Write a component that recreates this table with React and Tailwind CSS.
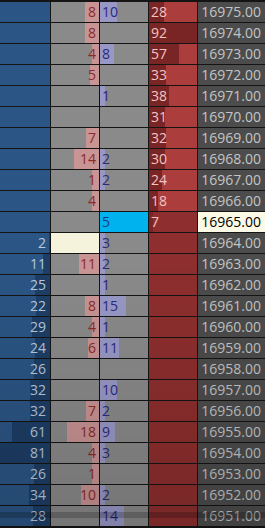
import React from "react";

const rows = [
  { p: 16975, ask: 28, s: 8, b: 10 },
  { p: 16974, ask: 92, s: 8 },
  { p: 16973, ask: 57, s: 4, b: 8 },
  { p: 16972, ask: 33, s: 5 },
  { p: 16971, ask: 38, b: 1 },
  { p: 16970, ask: 31 },
  { p: 16969, ask: 32, s: 7 },
  { p: 16968, ask: 30, s: 14, b: 2 },
  { p: 16967, ask: 24, s: 1, b: 2 },
  { p: 16966, ask: 18, s: 4 },
  { p: 16965, ask: 7, b: 5, cur: true },
  { p: 16964, bid: 2, b: 3, last: true },
  { p: 16963, bid: 11, s: 11, b: 2 },
  { p: 16962, bid: 25, b: 1 },
  { p: 16961, bid: 22, s: 8, b: 15 },
  { p: 16960, bid: 29, s: 4, b: 1 },
  { p: 16959, bid: 24, s: 6, b: 11 },
  { p: 16958, bid: 26 },
  { p: 16957, bid: 32, b: 10 },
  { p: 16956, bid: 32, s: 7, b: 2 },
  { p: 16955, bid: 61, s: 18, b: 9 },
  { p: 16954, bid: 81, s: 4, b: 3 },
  { p: 16953, bid: 26, s: 1 },
  { p: 16952, bid: 34, s: 10, b: 2 },
  { p: 16951, bid: 28, b: 14 },
];

function Row({ r }) {
  const askBase = r.ask && !r.cur ? "bg-[#ab3d3d]" : "bg-[#8e2e2e]";
  return (
    <div className="grid grid-cols-[50px_48px_48px_48px_67px] gap-x-px h-5">
      {/* bid */}
      <div className="relative bg-[#2b5584] flex items-center justify-end pr-1 overflow-hidden">
        {r.bid ? (
          <div
            className="absolute right-0 top-0 bottom-0 bg-[#1d3e66]"
            style={{ width: `${(r.bid / 81) * 50}px` }}
          />
        ) : null}
        {r.bid ? <span className="relative text-[#b9c9de]">{r.bid}</span> : null}
      </div>
      {/* sells at bid */}
      <div
        className={`relative flex items-center justify-end pr-[3px] overflow-hidden ${
          r.last ? "bg-[#f6f3dd]" : "bg-[#8a8a8a]"
        }`}
      >
        {r.s ? (
          <div
            className="absolute right-0 top-0 bottom-0 bg-[#c99494]"
            style={{ width: `${Math.max(r.s * 1.8, 7)}px` }}
          />
        ) : null}
        {r.s ? <span className="relative text-[#8c2b2b]">{r.s}</span> : null}
      </div>
      {/* buys at ask */}
      <div
        className={`relative flex items-center pl-[2px] overflow-hidden ${
          r.cur ? "bg-[#00b3ef]" : "bg-[#8a8a8a]"
        }`}
      >
        {r.b && !r.cur ? (
          <div
            className="absolute left-0 top-0 bottom-0 bg-[#9898c6]"
            style={{ width: `${Math.max(r.b * 1.7, 5)}px` }}
          />
        ) : null}
        {r.b ? (
          <span className={`relative ${r.cur ? "text-[#1e3a78]" : "text-[#2b2b7e]"}`}>{r.b}</span>
        ) : null}
      </div>
      {/* ask */}
      <div className={`relative ${askBase} flex items-center pl-[2px] overflow-hidden`}>
        {r.ask ? (
          <div
            className="absolute left-0 top-0 bottom-0 bg-[#792525]"
            style={{ width: `${(r.ask / 92) * 48}px` }}
          />
        ) : null}
        {r.ask ? <span className="relative text-[#f2c4c4]">{r.ask}</span> : null}
      </div>
      {/* price */}
      <div
        className={`flex items-center justify-end pr-1 ${
          r.cur ? "bg-[#fcf9e7] text-black" : "bg-[#4c4c4c] text-[#c4c4c4]"
        }`}
      >
        {r.p.toFixed(2)}
      </div>
    </div>
  );
}

export default function App() {
  return (
    <div
      className="relative w-[265px] h-[528px] overflow-hidden bg-[#141414] pt-[2px] flex flex-col gap-y-px text-[14px] leading-none"
      style={{ fontFamily: '"Open Sans", "Noto Sans", sans-serif' }}
    >
      {rows.map((r) => (
        <Row key={r.p} r={r} />
      ))}
      <div className="pointer-events-none absolute inset-x-0 top-[260px] bottom-0 bg-gradient-to-b from-transparent to-black/15" />
      <div className="pointer-events-none absolute inset-x-0 top-[512px] h-[6px] bg-black/20" />
    </div>
  );
}
